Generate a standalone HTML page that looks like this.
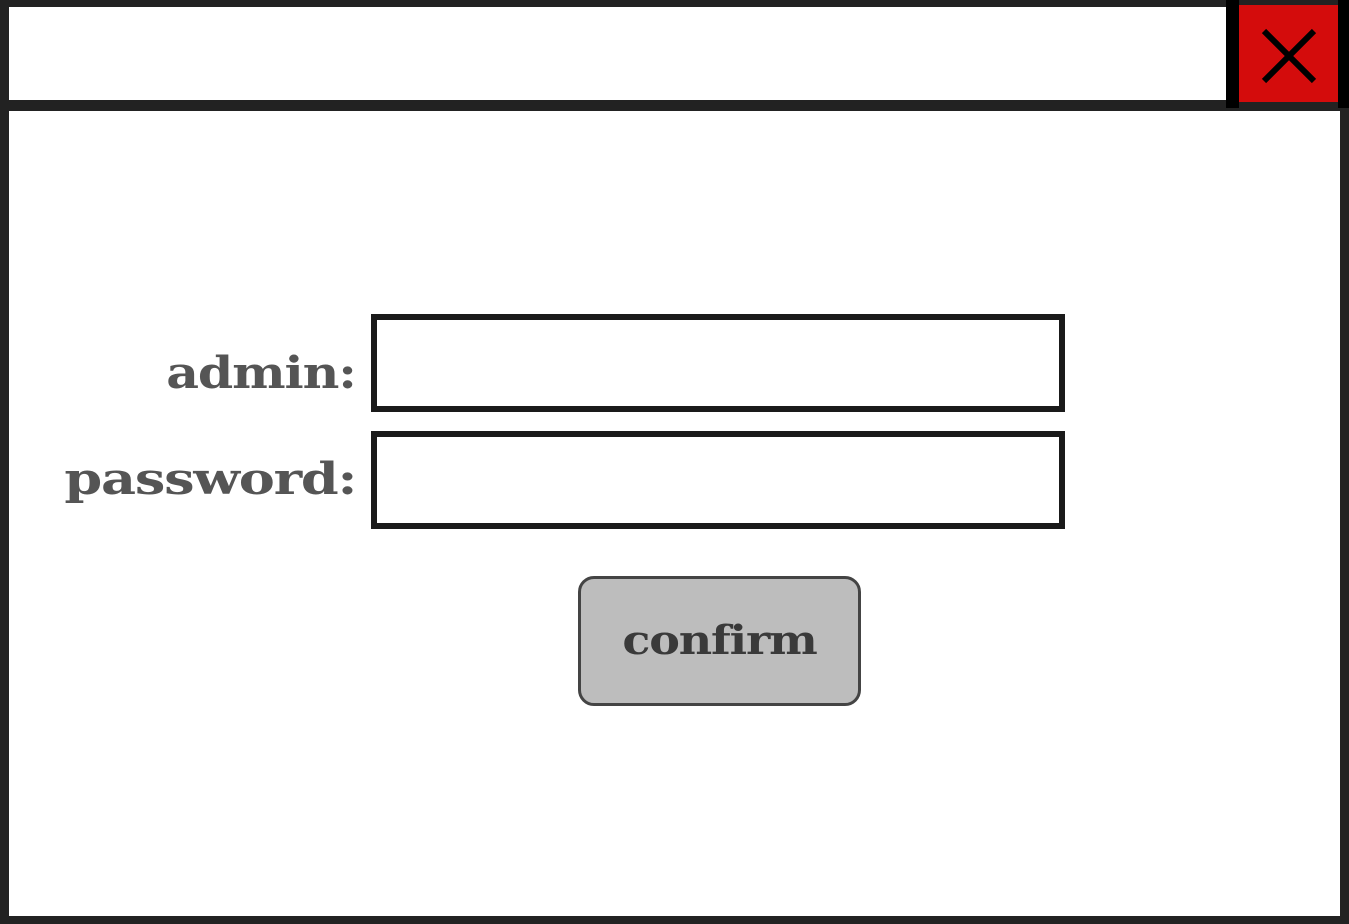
<!DOCTYPE html>
<html><head><style>
html,body{margin:0;padding:0}
body{width:1349px;height:924px;background:#222;position:relative;overflow:hidden;font-family:"DejaVu Serif","Liberation Serif",serif}
.top{position:absolute;left:9px;top:7px;width:1217px;height:93px;background:#fff}
.blk{position:absolute;left:1226px;top:0;width:13px;height:108px;background:#000}
.red{position:absolute;left:1239px;top:5px;width:99px;height:97px;background:#d40c0c}
.rblk{position:absolute;left:1338px;top:0;width:11px;height:108px;background:#000}
.panel{position:absolute;left:9px;top:111px;width:1331px;height:805px;background:#fff}
.lbl{position:absolute;right:993px;color:#555;font-weight:bold;font-size:44px;letter-spacing:-1px;line-height:1;transform-origin:right center}
.inp{position:absolute;left:371px;width:682px;height:86px;border:6px solid #1a1a1a;background:#fff}
.btn{position:absolute;left:578px;top:576px;width:277px;height:124px;border:3px solid #444;border-radius:16px;background:#bdbdbd;color:#3a3a3a;font-weight:bold;font-size:40px;text-align:center;line-height:124px;letter-spacing:-1px}
.btn span{display:inline-block;transform:scaleX(1.15)}
</style></head><body>
<div class="top"></div>
<div class="blk"></div>
<div class="red"><svg width="99" height="97"><path d="M25 26 L75 76 M75 26 L25 76" stroke="#000" stroke-width="6"/></svg></div>
<div class="rblk"></div>
<div class="panel"></div>
<div class="lbl" style="top:352px;transform:scaleX(1.15)">admin:</div>
<div class="lbl" style="top:458px;transform:scaleX(1.23)">password:</div>
<div class="inp" style="top:314px"></div>
<div class="inp" style="top:431px"></div>
<div class="btn"><span>confirm</span></div>
</body></html>
